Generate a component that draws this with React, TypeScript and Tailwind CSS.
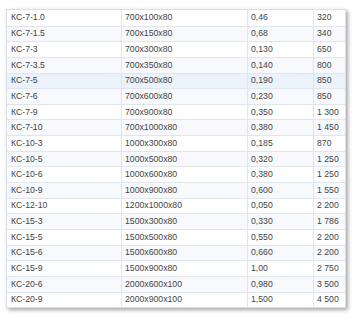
import React from "react";

const rows: [string, string, string, string][] = [
  ["КС-7-1.0", "700x100x80", "0,46", "320"],
  ["КС-7-1.5", "700x150x80", "0,68", "340"],
  ["КС-7-3", "700x300x80", "0,130", "650"],
  ["КС-7-3.5", "700x350x80", "0,140", "800"],
  ["КС-7-5", "700x500x80", "0,190", "850"],
  ["КС-7-6", "700x600x80", "0,230", "850"],
  ["КС-7-9", "700x900x80", "0,350", "1 300"],
  ["КС-7-10", "700x1000x80", "0,380", "1 450"],
  ["КС-10-3", "1000x300x80", "0,185", "870"],
  ["КС-10-5", "1000x500x80", "0,320", "1 250"],
  ["КС-10-6", "1000x600x80", "0,380", "1 250"],
  ["КС-10-9", "1000x900x80", "0,600", "1 550"],
  ["КС-12-10", "1200x1000x80", "0,050", "2 200"],
  ["КС-15-3", "1500x300x80", "0,330", "1 786"],
  ["КС-15-5", "1500x500x80", "0,550", "2 200"],
  ["КС-15-6", "1500x600x80", "0,660", "2 200"],
  ["КС-15-9", "1500x900x80", "1,00", "2 750"],
  ["КС-20-6", "2000x600x100", "0,980", "3 500"],
  ["КС-20-9", "2000x900x100", "1,500", "4 500"],
];

export default function App() {
  return (
    <div className="w-[358px] h-[320px] bg-white pt-[9px] pl-[6px]" style={{ fontFamily: '"Liberation Sans", Arial, sans-serif' }}>
      <div className="w-[340px] bg-white shadow-[2px_2px_4px_rgba(0,0,0,0.35)] border border-[#d9dfe6]">
        {rows.map((r, i) => (
          <div
            key={i}
            className={`flex h-[15.65px] items-center text-[8.7px] text-[#444] ${i > 0 ? "border-t border-[#e1e6ec]" : ""} ${i === 4 ? "bg-[#eaf2fb]" : i % 2 === 1 ? "bg-[#f7f9fc]" : "bg-white"}`}
          >
            <div className="w-[115px] h-full flex items-center pl-[4px] border-r border-[#e1e6ec]">{r[0]}</div>
            <div className="w-[126px] h-full flex items-center pl-[3px] border-r border-[#e1e6ec]">{r[1]}</div>
            <div className="w-[66px] h-full flex items-center pl-[3px] border-r border-[#e1e6ec]">{r[2]}</div>
            <div className="flex-1 h-full flex items-center pl-[3px]">{r[3]}</div>
          </div>
        ))}
      </div>
    </div>
  );
}
